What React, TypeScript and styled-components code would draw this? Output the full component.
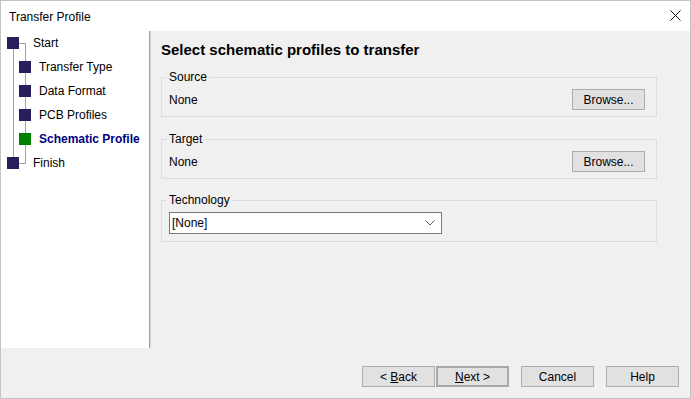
import React from 'react'
import styled, {createGlobalStyle} from 'styled-components'

const steps = [
  {label: 'Start', level: 0},
  {label: 'Transfer Type', level: 1},
  {label: 'Data Format', level: 1},
  {label: 'PCB Profiles', level: 1},
  {label: 'Schematic Profile', level: 1, active: true},
  {label: 'Finish', level: 0},
]

const App = () => {
  return (
    <>
      <Global />
      <Window>
        <TitleBar>
          <Title>Transfer Profile</Title>
          <Close>
            <svg width="11" height="11" viewBox="0 0 11 11">
              <path d="M0.5 0.5L10.5 10.5M10.5 0.5L0.5 10.5" stroke="#111" strokeWidth="1" fill="none" />
            </svg>
          </Close>
        </TitleBar>

        <Main>
          <LeftPane>
            <Tree>
              <TreeLines width="40" height="150">
                <path
                  d="M12.5 18V126M18 12.5H24.5V132.5M18 132.5H24.5"
                  stroke="#a0a0a0"
                  strokeWidth="1"
                  fill="none"
                />
              </TreeLines>
              {steps.map(s => (
                <Step key={s.label} level={s.level}>
                  <Square $active={s.active} />
                  <StepLabel level={s.level} $active={s.active}>{s.label}</StepLabel>
                </Step>
              ))}
            </Tree>
          </LeftPane>

          <RightPane>
            <Heading>Select schematic profiles to transfer</Heading>

            <Group $mb={15}>
              <Legend>Source</Legend>
              <GroupRow>
                <Value>None</Value>
                <Button>Browse...</Button>
              </GroupRow>
            </Group>

            <Group $mb={14}>
              <Legend>Target</Legend>
              <GroupRow>
                <Value>None</Value>
                <Button>Browse...</Button>
              </GroupRow>
            </Group>

            <Group $mb={0}>
              <Legend>Technology</Legend>
              <Combo>
                <ComboText>[None]</ComboText>
                <svg width="10" height="6" viewBox="0 0 10 6">
                  <path d="M0.5 0.5L5 5L9.5 0.5" stroke="#606060" strokeWidth="1" fill="none" />
                </svg>
              </Combo>
            </Group>
          </RightPane>
        </Main>

        <Footer>
          <Button>&lt; <u>B</u>ack</Button>
          <Button $default>
            <u>N</u>ext &gt;
          </Button>
          <Button>Cancel</Button>
          <Button>Help</Button>
        </Footer>
      </Window>
    </>
  )
}

export default App

const Global = createGlobalStyle`
  html, body {
    margin: 0;
    padding: 0;
    background: #fff;
  }
  * {
    box-sizing: border-box;
  }
`

const Window = styled.div`
  width: 691px;
  height: 399px;
  border: 1px solid #c4c4c4;
  display: flex;
  flex-direction: column;
  font-family: "Liberation Sans", Arial, sans-serif;
  font-size: 12px;
  color: #000;
  background: #f0f0f0;
  overflow: hidden;
`

const TitleBar = styled.div`
  height: 30px;
  flex-shrink: 0;
  background: #fff;
  display: flex;
  align-items: center;
  justify-content: space-between;
  padding: 0 9px 0 8px;
`

const Title = styled.div`
  font-size: 12px;
  padding-top: 1px;
`

const Close = styled.div`
  width: 11px;
  height: 11px;
  display: flex;
  margin-top: -1px;
`

const Main = styled.div`
  height: 317px;
  flex-shrink: 0;
  display: flex;
`

const LeftPane = styled.div`
  width: 149px;
  background: #fff;
  border-right: 1px solid #a0a0a0;
`

const Tree = styled.div`
  position: relative;
`

const TreeLines = styled.svg`
  position: absolute;
  top: 0;
  left: 0;
`

const Step = styled.div<{level: number}>`
  position: relative;
  height: 24px;
  display: flex;
  align-items: center;
  padding-left: ${p => (p.level === 0 ? 6 : 18)}px;
`

const Square = styled.div<{$active?: boolean}>`
  width: 12px;
  height: 12px;
  flex-shrink: 0;
  background: ${p => (p.$active ? '#008000' : '#2a1d5c')};
`

const StepLabel = styled.span<{level: number; $active?: boolean}>`
  margin-left: ${p => (p.level === 0 ? 14 : 8)}px;
  font-size: 12px;
  white-space: nowrap;
  font-weight: ${p => (p.$active ? 'bold' : 'normal')};
  color: ${p => (p.$active ? '#000080' : '#000')};
`

const RightPane = styled.div`
  flex: 1;
  border-left: 1px solid #d6d6de;
  padding: 10px 0 0 10px;
  display: flex;
  flex-direction: column;
`

const Heading = styled.div`
  font-size: 15px;
  font-weight: bold;
  line-height: 18px;
  margin-bottom: 11px;
`

const Group = styled.fieldset<{$mb: number}>`
  width: 496px;
  margin: 0 0 ${p => p.$mb}px 0;
  border: 1px solid #dcdcdc;
  padding: 5px 11px 6px 7px;
  min-width: 0;
`

const Legend = styled.legend`
  padding: 0 2px;
  margin-left: -2px;
  font-size: 12px;
  line-height: 14px;
`

const GroupRow = styled.div`
  display: flex;
  align-items: center;
  justify-content: space-between;
`

const Value = styled.span`
  font-size: 12px;
`

const Button = styled.button<{$default?: boolean}>`
  width: 73px;
  height: 21px;
  padding: 0;
  font-family: "Liberation Sans", Arial, sans-serif;
  font-size: 12px;
  color: #000;
  background: #e1e1e1;
  border: 1px solid ${p => (p.$default ? '#a8a8a8' : '#adadad')};
  box-shadow: ${p => (p.$default ? 'inset 0 0 0 1px #a8a8a8' : 'none')};
`

const Combo = styled.div`
  width: 273px;
  height: 22px;
  background: #fff;
  border: 1px solid #7a7a7a;
  display: flex;
  align-items: center;
  justify-content: space-between;
  padding: 0 6px 0 2px;
  margin-bottom: 1px;
`

const ComboText = styled.span`
  font-size: 12px;
`

const Footer = styled.div`
  flex: 1;
  display: flex;
  justify-content: flex-end;
  align-items: flex-start;
  gap: 12px;
  padding: 18px 11px 0 0;

  & > :first-child {
    margin-right: -11px;
  }
`
